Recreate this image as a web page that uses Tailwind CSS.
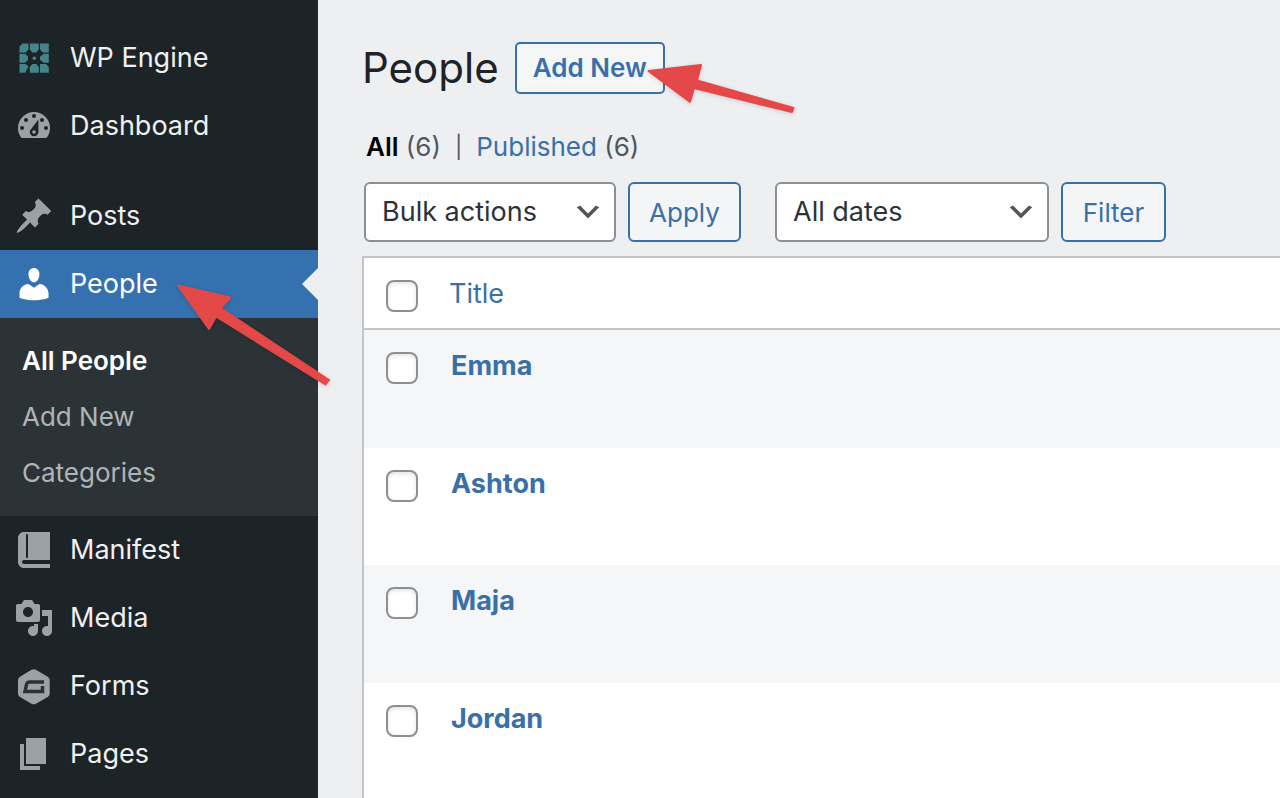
<!doctype html>
<html lang="en">
    <head>
        <meta charset="utf-8" />
        <meta name="viewport" content="width=device-width, initial-scale=1" />
        <script src="https://cdn.jsdelivr.net/npm/@tailwindcss/browser@4"></script>
        <title>People</title>
    </head>

    <body
        class="relative flex h-screen overflow-hidden bg-[#edeff0] font-['Inter',sans-serif] text-[27px] leading-8 text-[#50575e]"
    >
        <!-- Admin menu -->
        <nav class="w-[318px] shrink-0 bg-[#1d2428] pt-6 text-[#f0f0f1]">
            <a href="#" class="flex h-[68px] items-center gap-4 pl-3.5">
                <svg class="size-10" viewBox="0 0 40 40" fill="#45848a">
                    <path d="M8.500 5.500h6v6l-3 3h-6v-6zM15.800 5.500h9v6l-2.500 3h-4l-2.500-3zM26 5.500h8.800v9h-6l-2.800-3zM5.500 15.800h5.500l3 2.700v3.600l-3 2.700H5.500zM34.800 15.800h-5l-3.800 3v3l3.800 3h5zM5.500 26h6l3 2.500-3.500 6.300H5.500zM18.300 26h4l2.500 3v5.800h-9V29zM26 26h6l2.800 3v5.800H26z" />
                    <circle cx="20.300" cy="20.300" r="1.800" />
                </svg>
                WP Engine
            </a>
            <a href="#" class="mb-[22px] flex h-[68px] items-center gap-4 pl-3.5">
                <svg class="size-10" viewBox="0 0 20 20" fill="#9aa2a5">
                    <path d="M3.76 16h12.48c1.1-1.37 1.76-3.11 1.76-5 0-4.42-3.58-8-8-8s-8 3.58-8 8c0 1.89.66 3.63 1.76 5z" />
                    <g fill="#1d2428">
                        <circle cx="10" cy="5" r="1" />
                        <circle cx="6" cy="7" r="1" />
                        <circle cx="14" cy="7" r="1" />
                        <circle cx="4" cy="11" r="1" />
                        <circle cx="16" cy="11" r="1" />
                        <path d="M8.500 11.600L12.200 6.800V13c0 1.200-1 2.100-2.200 2.100S7.900 14.200 7.900 13c0-.55.25-1.050.6-1.400z" />
                    </g>
                    <circle cx="10" cy="13" r=".9" />
                </svg>
                Dashboard
            </a>
            <a href="#" class="flex h-[68px] items-center gap-4 pl-3.5">
                <svg class="size-10" viewBox="0 0 20 20" fill="#9aa2a5">
                    <path d="M10.44 3.02l1.82-1.82 6.36 6.35-1.83 1.82c-1.05-.68-2.48-.57-3.41.36l-.75.75c-.92.93-1.04 2.35-.35 3.41l-1.83 1.82-2.41-2.41-2.8 2.79c-.42.42-3.38 2.71-3.8 2.29s1.86-3.39 2.28-3.81l2.79-2.79L4.1 9.36l1.83-1.82c1.05.69 2.48.57 3.4-.36l.75-.75c.93-.92 1.05-2.35.36-3.41z" />
                </svg>
                Posts
            </a>
            <a href="#" class="flex h-[68px] items-center gap-4 bg-[#3571ae] pl-3.5 text-white">
                <svg class="size-10" viewBox="0 0 20 20" fill="#fff">
                    <path d="M10 9.25c-2.27 0-2.73-3.44-2.73-3.44C7 4.02 7.82 2 9.97 2c2.16 0 2.98 2.02 2.71 3.81 0 0-.41 3.44-2.68 3.44zm0 2.57L12.72 10c2.39 0 4.52 2.33 4.52 4.53v2.49s-3.65 1.13-7.24 1.13c-3.65 0-7.24-1.13-7.24-1.13v-2.49c0-2.25 1.94-4.48 4.47-4.48z" />
                </svg>
                People
                <svg class="ml-auto h-8 w-4" viewBox="0 0 16 32" fill="#edeff0">
                    <path d="M16 0v32L0 16z" />
                </svg>
            </a>
            <div class="flex flex-col bg-[#2c3337] py-[15px] text-[26px] text-[#b0b4b8]">
                <a href="#" class="flex h-14 items-center pl-[22px] font-semibold text-white">All People</a>
                <a href="#" class="flex h-14 items-center pl-[22px]">Add New</a>
                <a href="#" class="flex h-14 items-center pl-[22px]">Categories</a>
            </div>
            <a href="#" class="flex h-[68px] items-center gap-4 pl-3.5">
                <svg class="size-10" viewBox="0 0 20 20" fill="#9aa2a5">
                    <path d="M5 17h13v2H5c-1.66 0-3-1.34-3-3V4c0-1.66 1.34-3 3-3h13v14H5c-.55 0-1 .45-1 1s.45 1 1 1zm2-3.500v-11c0-.28-.22-.5-.5-.5s-.5.22-.5.5v11c0 .28.22.5.5.5s.5-.22.5-.5z" />
                </svg>
                Manifest
            </a>
            <a href="#" class="flex h-[68px] items-center gap-4 pl-3.5">
                <svg class="size-10" viewBox="0 0 20 20" fill="#9aa2a5">
                    <path d="M13 11V4c0-.55-.45-1-1-1h-1.67L9 1H5L3.67 3H2c-.55 0-1 .45-1 1v7c0 .55.45 1 1 1h10c.55 0 1-.45 1-1zM7 4.5c1.38 0 2.5 1.12 2.5 2.5S8.38 9.5 7 9.5 4.5 8.38 4.5 7 5.62 4.5 7 4.5zM14 6h5v10.5c0 1.38-1.12 2.5-2.5 2.5S14 17.88 14 16.5s1.12-2.5 2.5-2.5c.17 0 .34.02.5.05V9h-3V6zm-4 8.05V13h2v3.5c0 1.38-1.12 2.5-2.5 2.5S7 17.88 7 16.5 8.12 14 9.5 14c.17 0 .34.02.5.05z" />
                </svg>
                Media
            </a>
            <a href="#" class="flex h-[68px] items-center gap-4 pl-3.5">
                <svg class="size-10" viewBox="0 0 40 40">
                    <path d="M17.5 3.8q2.2-1.2 4.4 0l11.8 6.9q2 1.2 2 3.4v13.4q0 2.2-2 3.4l-11.8 6.8q-2.2 1.2-4.4 0L6 30.9q-2-1.2-2-3.4V14.1q0-2.2 2-3.4z" fill="#9aa2a5" />
                    <path d="M30 16H15.500q-2.500 0-3 2.500L11 25.500h17.500v-5.500" fill="none" stroke="#2b3237" stroke-width="3.500" />
                </svg>
                Forms
            </a>
            <a href="#" class="flex h-[68px] items-center gap-4 pl-3.5">
                <svg class="size-10" viewBox="0 0 20 20" fill="#9aa2a5">
                    <path d="M6 15V2h10v13H6zm-1 1h8v2H3V5h2v11z" />
                </svg>
                Pages
            </a>
        </nav>

        <main class="min-w-0 flex-1 pt-[42px] pl-11">
            <div class="flex items-center gap-4">
                <h1 class="text-[42px] leading-[52px] text-[#1d2327]">People</h1>
                <a
                    href="#"
                    class="flex h-[52px] items-center rounded-[5px] border-2 border-[#3a70a8] bg-[#f5f7f7] px-4 text-[26px] font-semibold text-[#3a70a8]"
                    >Add New</a
                >
            </div>

            <ul class="mt-[37px] flex gap-3.5 pl-1 text-[26px]">
                <li><a href="#" class="font-semibold text-black">All</a> (6)</li>
                <li class="flex items-center text-[22px]">|</li>
                <li><a href="#" class="text-[#3a70a8]">Published</a> (6)</li>
            </ul>

            <form class="mt-[19px] flex pl-0.5">
                <div class="relative mr-3">
                    <select
                        aria-label="Bulk actions"
                        class="h-[60px] w-[252px] appearance-none rounded-md border-2 border-[#8c8f94] bg-white pl-4 text-[#2c3338]"
                    >
                        <option>Bulk actions</option>
                        <option>Edit</option>
                        <option>Move to Trash</option>
                    </select>
                    <svg class="pointer-events-none absolute top-3.5 right-3 size-8" viewBox="0 0 20 20" fill="#555">
                        <path d="M5 6l5 5 5-5 2 1-7 7-7-7 2-1z" />
                    </svg>
                </div>
                <button
                    type="button"
                    class="mr-[34px] h-[60px] w-[113px] rounded-md border-2 border-[#3a70a8] bg-[#f3f5f6] pt-0.5 text-[26px] text-[#3a70a8]"
                >
                    Apply
                </button>
                <div class="relative mr-3">
                    <select
                        aria-label="Filter by date"
                        class="h-[60px] w-[274px] appearance-none rounded-md border-2 border-[#8c8f94] bg-white pl-4 text-[#2c3338]"
                    >
                        <option>All dates</option>
                    </select>
                    <svg class="pointer-events-none absolute top-3.5 right-3 size-8" viewBox="0 0 20 20" fill="#555">
                        <path d="M5 6l5 5 5-5 2 1-7 7-7-7 2-1z" />
                    </svg>
                </div>
                <button
                    type="button"
                    class="h-[60px] w-[105px] rounded-md border-2 border-[#3a70a8] bg-[#f3f5f6] pt-0.5 text-[26px] text-[#3a70a8]"
                >
                    Filter
                </button>
            </form>

            <table
                class="mt-3.5 w-full border-separate border-spacing-0 border-t-2 border-l-2 border-[#c3c4c7] bg-white text-left text-[#3a70a8]"
            >
                <thead>
                    <tr class="h-[72px]">
                        <th class="w-[85px] border-b-2 border-[#c3c4c7] pt-1.5 pl-[22px]">
                            <input
                                type="checkbox"
                                aria-label="Select all"
                                class="block size-8 appearance-none rounded-lg border-2 border-[#8c8f94] bg-white shadow-[inset_0_2px_4px_rgba(0,0,0,0.1)]"
                            />
                        </th>
                        <th class="border-b-2 border-[#c3c4c7] pt-0.5 font-normal">
                            <a href="#">Title</a>
                        </th>
                    </tr>
                </thead>
                <tbody class="align-top font-bold">
                    <tr class="h-[118px] bg-[#f5f6f7]">
                        <td class="pt-[22px] pl-[22px]">
                            <input
                                type="checkbox"
                                aria-label="Select Emma"
                                class="block size-8 appearance-none rounded-lg border-2 border-[#8c8f94] bg-white shadow-[inset_0_2px_4px_rgba(0,0,0,0.1)]"
                            />
                        </td>
                        <td class="pt-5 pl-0.5"><a href="#">Emma</a></td>
                    </tr>
                    <tr class="h-[117px]">
                        <td class="pt-[22px] pl-[22px]">
                            <input
                                type="checkbox"
                                aria-label="Select Ashton"
                                class="block size-8 appearance-none rounded-lg border-2 border-[#8c8f94] bg-white shadow-[inset_0_2px_4px_rgba(0,0,0,0.1)]"
                            />
                        </td>
                        <td class="pt-5 pl-0.5"><a href="#">Ashton</a></td>
                    </tr>
                    <tr class="h-[118px] bg-[#f5f6f7]">
                        <td class="pt-[22px] pl-[22px]">
                            <input
                                type="checkbox"
                                aria-label="Select Maja"
                                class="block size-8 appearance-none rounded-lg border-2 border-[#8c8f94] bg-white shadow-[inset_0_2px_4px_rgba(0,0,0,0.1)]"
                            />
                        </td>
                        <td class="pt-5 pl-0.5"><a href="#">Maja</a></td>
                    </tr>
                    <tr class="h-[117px]">
                        <td class="pt-[22px] pl-[22px]">
                            <input
                                type="checkbox"
                                aria-label="Select Jordan"
                                class="block size-8 appearance-none rounded-lg border-2 border-[#8c8f94] bg-white shadow-[inset_0_2px_4px_rgba(0,0,0,0.1)]"
                            />
                        </td>
                        <td class="pt-5 pl-0.5"><a href="#">Jordan</a></td>
                    </tr>
                </tbody>
            </table>
        </main>

        <!-- Arrows pointing at the People menu item and the Add New button -->
        <svg
            class="pointer-events-none absolute top-[276px] left-[168px] h-[120px] w-[172px] drop-shadow-sm"
            viewBox="168 276 172 120"
            fill="#e54848"
            stroke="#e54848"
            stroke-width="2"
            stroke-linejoin="round"
        >
            <path d="M178 285.500L230 297.500L220.500 308L329 380L325.500 384.500L216 316.500L209 329z" />
        </svg>
        <svg
            class="pointer-events-none absolute top-[56px] left-[640px] h-[66px] w-[164px] drop-shadow-sm"
            viewBox="640 56 164 66"
            fill="#e54848"
            stroke="#e54848"
            stroke-width="2"
            stroke-linejoin="round"
        >
            <path d="M648.500 71L701 65L697 80.500L793.500 108L792 112L694 88L690 102z" />
        </svg>
    </body>
</html>
